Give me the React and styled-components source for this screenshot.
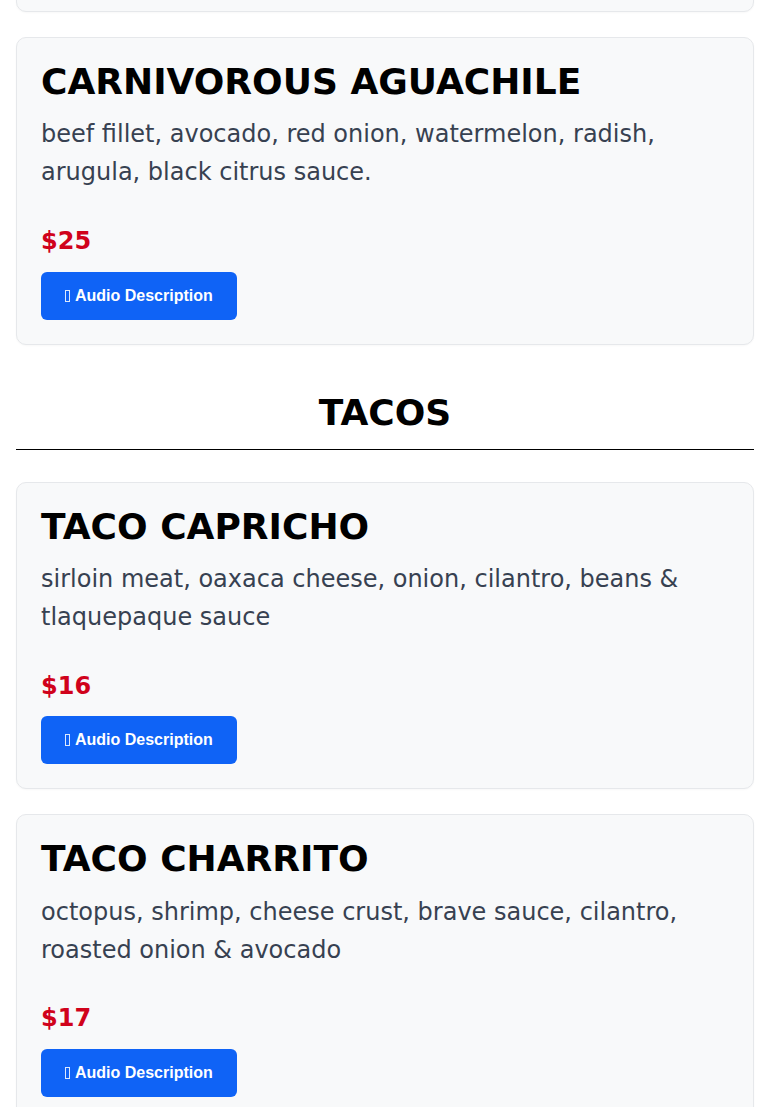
import React from 'react';
import styled, { createGlobalStyle } from 'styled-components';

const GlobalStyle = createGlobalStyle`
  html, body {
    margin: 0;
    padding: 0;
    background: #ffffff;
    font-family: "DejaVu Sans", sans-serif;
  }
`;

const menu = [
  {
    category: null,
    items: [
      {
        name: 'SHRIMP AGUACHILE',
        details: 'shrimp, cucumber, red onion, serrano chile, lime, green aguachile sauce.',
        price: 24,
      },
      {
        name: 'CARNIVOROUS AGUACHILE',
        details: 'beef fillet, avocado, red onion, watermelon, radish, arugula, black citrus sauce.',
        price: 25,
      },
    ],
  },
  {
    category: 'TACOS',
    items: [
      {
        name: 'TACO CAPRICHO',
        details: 'sirloin meat, oaxaca cheese, onion, cilantro, beans & tlaquepaque sauce',
        price: 16,
      },
      {
        name: 'TACO CHARRITO',
        details: 'octopus, shrimp, cheese crust, brave sauce, cilantro, roasted onion & avocado',
        price: 17,
      },
    ],
  },
];

const MenuItem = ({ name, details, price }) => (
  <Card>
    <ItemName>{name}</ItemName>
    <Details>{details}</Details>
    <Price>${price}</Price>
    <AudioButton type="button">
      <MissingIcon aria-hidden="true" />
      Audio Description
    </AudioButton>
  </Card>
);

const App = () => {
  return (
    <>
      <GlobalStyle />
      <Wrapper>
        {menu.map((section, i) => (
          <section key={i}>
            {section.category && <Category>{section.category}</Category>}
            {section.items.map((item) => (
              <MenuItem key={item.name} {...item} />
            ))}
          </section>
        ))}
      </Wrapper>
    </>
  );
};

// page is shown scrolled: only the bottom edge of the first card is visible
const Wrapper = styled.main`
  padding: 0 16px;
  margin-top: -296px;
`;

const Card = styled.article`
  background: #f8f9fa;
  border: 1px solid #e6e8eb;
  border-radius: 10px;
  padding: 22px 24px 24px;
  margin-bottom: 25px;
  box-shadow: 0 1px 2px rgba(0, 0, 0, 0.03);
`;

const ItemName = styled.h3`
  margin: 0 0 12px;
  font-size: 36px;
  line-height: 1.2;
  font-weight: 700;
  color: #000;
`;

const Details = styled.p`
  margin: 0 0 35px;
  font-size: 24px;
  line-height: 1.6;
  color: #374151;
`;

const Price = styled.p`
  margin: 0 0 16px;
  font-size: 24px;
  line-height: 1.2;
  font-weight: 700;
  color: #d0021b;
`;

const AudioButton = styled.button`
  display: inline-flex;
  align-items: center;
  background: #0f63f6;
  color: #fff;
  border: none;
  border-radius: 6px;
  padding: 12px 24px 12px 24px;
  font-family: "Liberation Sans", Arial, sans-serif;
  font-size: 16px;
  font-weight: 700;
  line-height: 24px;
  cursor: pointer;
`;

// the icon font never loaded in the original, so the glyph shows as an empty box
const MissingIcon = styled.span`
  display: inline-block;
  box-sizing: border-box;
  width: 5px;
  height: 12px;
  border: 1px solid rgba(255, 255, 255, 0.85);
  margin-right: 5px;
`;

const Category = styled.h2`
  margin: 46px 0 32px;
  padding-bottom: 15px;
  border-bottom: 1px solid #000;
  text-align: center;
  font-size: 36px;
  line-height: 1.2;
  font-weight: 700;
  color: #000;
`;

export default App;
